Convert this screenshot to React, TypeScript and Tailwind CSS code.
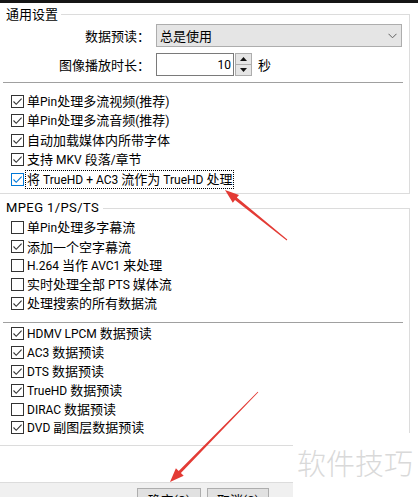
import React from 'react';

type Item = { label: string; checked: boolean };

const general: Item[] = [
  { label: '单Pin处理多流视频(推荐)', checked: true },
  { label: '单Pin处理多流音频(推荐)', checked: true },
  { label: '自动加载媒体内所带字体', checked: true },
  { label: '支持 MKV 段落/章节', checked: true },
];

const mpeg: Item[] = [
  { label: '单Pin处理多字幕流', checked: false },
  { label: '添加一个空字幕流', checked: true },
  { label: 'H.264 当作 AVC1 来处理', checked: false },
  { label: '实时处理全部 PTS 媒体流', checked: false },
  { label: '处理搜索的所有数据流', checked: true },
];

const preread: Item[] = [
  { label: 'HDMV LPCM 数据预读', checked: true },
  { label: 'AC3 数据预读', checked: true },
  { label: 'DTS 数据预读', checked: true },
  { label: 'TrueHD 数据预读', checked: true },
  { label: 'DIRAC 数据预读', checked: false },
  { label: 'DVD 副图层数据预读', checked: true },
];

// Latin runs get a proportional face a touch smaller than the CJK text, like the Windows UI font
const Txt = ({ s }: { s: string }) => (
  <>
    {s
      .split(/([\x20-\x7e]+)/)
      .filter(Boolean)
      .map((part, i) =>
        /^[\x20-\x7e]+$/.test(part) ? (
          <span key={i} className="font-['Roboto',sans-serif] text-[12px]">
            {part}
          </span>
        ) : (
          <span key={i}>{part}</span>
        )
      )}
  </>
);

const CheckBox = ({ checked, hot }: { checked: boolean; hot?: boolean }) => (
  <span
    className={`flex h-[13px] w-[13px] shrink-0 items-center justify-center border bg-white ${
      hot ? 'border-[#0078d7]' : 'border-[#333333]'
    }`}
  >
    {checked && (
      <svg width="11" height="11" viewBox="0 0 11 11">
        <path d="M1.5 5.5 L4.2 8.3 L9.6 2.6" fill="none" stroke={hot ? '#0078d7' : '#333333'} strokeWidth="1.1" />
      </svg>
    )}
  </span>
);

const Row = ({ item, rowClass }: { item: Item; rowClass: string }) => (
  <div className={`flex items-center pl-[11px] ${rowClass}`}>
    <CheckBox checked={item.checked} />
    <span className="ml-[3px] whitespace-nowrap text-[13px] leading-[16px]">
      <Txt s={item.label} />
    </span>
  </div>
);

const App = () => {
  return (
    <div className="relative h-[497px] w-[418px] overflow-hidden bg-white font-['Noto_Sans_CJK_SC',sans-serif] text-black">
      {/* window edge */}
      <div className="h-[3px] w-full bg-[#151515]" />

      {/* 通用设置 */}
      <fieldset className="mt-[3px] w-[410px] border-t border-r border-b border-[#dcdcdc]">
        <legend className="pl-[6px] pr-[3px] text-[13px] leading-[16px]">通用设置</legend>
        <div className="pt-[2px] pb-[4px] text-[13px]">
          <div className="flex h-[23px] items-center">
            <span className="w-[150px] text-right">数据预读：</span>
            <div className="ml-[6px] flex h-[23px] w-[246px] items-center justify-between border border-[#adadad] bg-[#e5e5e5] pl-[3px] pr-[4px]">
              <span>总是使用</span>
              <svg width="9" height="6" viewBox="0 0 9 6">
                <path d="M0.5 0.8 L4.5 4.8 L8.5 0.8" fill="none" stroke="#606060" strokeWidth="1" />
              </svg>
            </div>
          </div>
          <div className="mt-[6px] flex h-[23px] items-center">
            <span className="w-[150px] text-right">图像播放时长：</span>
            <div className="ml-[6px] flex h-[23px] w-[78px] items-center justify-end border border-[#7a7a7a] bg-white pr-[2px]">
              <Txt s="10" />
            </div>
            <div className="ml-[1px] flex h-[23px] w-[17px] flex-col border border-[#adadad] bg-[#e5e5e5]">
              <div className="flex flex-1 items-center justify-center border-b border-[#adadad]">
                <svg width="7" height="4" viewBox="0 0 7 4">
                  <path d="M0 4 L3.5 0 L7 4 Z" fill="#111" />
                </svg>
              </div>
              <div className="flex flex-1 items-center justify-center">
                <svg width="7" height="4" viewBox="0 0 7 4">
                  <path d="M0 0 L3.5 4 L7 0 Z" fill="#111" />
                </svg>
              </div>
            </div>
            <span className="ml-[6px]">秒</span>
          </div>
          <div className="ml-[3px] mt-[6px] h-px w-[400px] bg-[#a0a0a0]" />
          <div className="mt-[8.5px]">
            {general.map((item) => (
              <Row key={item.label} item={item} rowClass="h-[19.5px]" />
            ))}
            <div className="flex h-[19.5px] items-center pl-[11px]">
              <CheckBox checked hot />
              <span className="ml-[1px] whitespace-nowrap border border-dotted border-black px-[1px] text-[13px] leading-[15px]">
                <Txt s="将 TrueHD + AC3 流作为 TrueHD 处理" />
              </span>
            </div>
          </div>
        </div>
      </fieldset>

      {/* MPEG 1/PS/TS */}
      <fieldset className="mt-[6px] w-[410px] border-t border-r border-b border-[#dcdcdc]">
        <legend className="pl-[6px] pr-[4px] font-['Roboto',sans-serif] text-[13px] leading-[16px] tracking-[0.4px]">
          MPEG 1/PS/TS
        </legend>
        <div className="pt-[2.6px] pb-[7.6px]">
          {mpeg.map((item) => (
            <Row key={item.label} item={item} rowClass="h-[18.8px]" />
          ))}
          <div className="ml-[3px] mt-[9.4px] h-px w-[400px] bg-[#a0a0a0]" />
          <div className="mt-[1.6px]">
            {preread.map((item) => (
              <Row key={item.label} item={item} rowClass="h-[18.8px]" />
            ))}
          </div>
        </div>
      </fieldset>

      {/* dialog buttons */}
      <div className="mt-[36px] h-[40px] border-t border-[#dcdcdc] bg-[#f0f0f0] pt-[5px]">
        <div className="ml-[137px] flex gap-[6px] text-[13px]">
          <button className="h-[23px] w-[64px] border border-[#adadad] bg-[#e1e1e1] leading-[21px]">
            <Txt s="确定(O)" />
          </button>
          <button className="h-[23px] w-[62px] border border-[#adadad] bg-[#e1e1e1] leading-[21px]">
            <Txt s="取消(C)" />
          </button>
        </div>
      </div>

      {/* watermark */}
      <div className="absolute left-[293px] top-[433px] h-[64px] w-[125px] bg-white pl-[4px] pt-[15px] text-[29px] font-light leading-[29px] text-[#d9d9d9]">
        软件技巧
      </div>

      {/* annotation arrows */}
      <svg className="pointer-events-none absolute left-0 top-0" width="418" height="497" viewBox="0 0 418 497">
        <polygon
          points="287.3,239.6 236.8,197.6 239.0,194.9 225,190 232.8,202.7 235.0,200.0 286.7,240.4"
          fill="#e33b35"
        />
        <polygon
          points="258.3,392.3 180.9,473.1 183.7,475.8 170,482 175.9,468.2 178.7,470.9 257.7,391.7"
          fill="#e33b35"
        />
      </svg>
    </div>
  );
};

export default App;
